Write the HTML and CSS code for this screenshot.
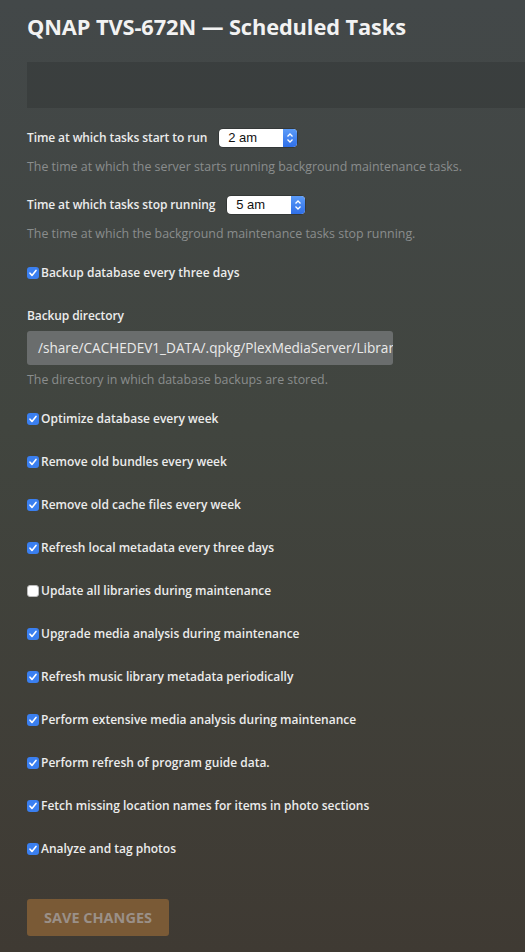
FILE: index.html
```
<!DOCTYPE html>
<html>
<head>
<meta charset="utf-8">
<link rel="stylesheet" href="styles.css">
</head>
<body>
<main class="page">
  <h1 class="title">QNAP TVS-672N — Scheduled Tasks</h1>
  <div class="panel"></div>

  <div class="select-row">
    <span class="label">Time at which tasks start to run</span>
    <div class="select"><span class="select-value">2 am</span><span class="stepper"><svg width="8" height="12" viewBox="0 0 8 12"><path d="M1.5 4.5 L4 2 L6.5 4.5 M1.5 7.5 L4 10 L6.5 7.5" fill="none" stroke="#fff" stroke-width="1.3"/></svg></span></div>
  </div>
  <p class="help help-a">The time at which the server starts running background maintenance tasks.</p>

  <div class="select-row">
    <span class="label">Time at which tasks stop running</span>
    <div class="select"><span class="select-value">5 am</span><span class="stepper"><svg width="8" height="12" viewBox="0 0 8 12"><path d="M1.5 4.5 L4 2 L6.5 4.5 M1.5 7.5 L4 10 L6.5 7.5" fill="none" stroke="#fff" stroke-width="1.3"/></svg></span></div>
  </div>
  <p class="help help-b">The time at which the background maintenance tasks stop running.</p>

  <label class="check first"><span class="box on"><svg width="12" height="12" viewBox="0 0 12 12"><path d="M3 6.2 L5 8.4 L9 3.4" fill="none" stroke="#fff" stroke-width="1.6" stroke-linecap="round" stroke-linejoin="round"/></svg></span>Backup database every three days</label>

  <div class="label field-label">Backup directory</div>
  <div class="text-input">/share/CACHEDEV1_DATA/.qpkg/PlexMediaServer/Library</div>
  <p class="help help-c">The directory in which database backups are stored.</p>

  <div class="checks">
    <label class="check"><span class="box on"><svg width="12" height="12" viewBox="0 0 12 12"><path d="M3 6.2 L5 8.4 L9 3.4" fill="none" stroke="#fff" stroke-width="1.6" stroke-linecap="round" stroke-linejoin="round"/></svg></span>Optimize database every week</label>
    <label class="check"><span class="box on"><svg width="12" height="12" viewBox="0 0 12 12"><path d="M3 6.2 L5 8.4 L9 3.4" fill="none" stroke="#fff" stroke-width="1.6" stroke-linecap="round" stroke-linejoin="round"/></svg></span>Remove old bundles every week</label>
    <label class="check"><span class="box on"><svg width="12" height="12" viewBox="0 0 12 12"><path d="M3 6.2 L5 8.4 L9 3.4" fill="none" stroke="#fff" stroke-width="1.6" stroke-linecap="round" stroke-linejoin="round"/></svg></span>Remove old cache files every week</label>
    <label class="check"><span class="box on"><svg width="12" height="12" viewBox="0 0 12 12"><path d="M3 6.2 L5 8.4 L9 3.4" fill="none" stroke="#fff" stroke-width="1.6" stroke-linecap="round" stroke-linejoin="round"/></svg></span>Refresh local metadata every three days</label>
    <label class="check"><span class="box off"></span>Update all libraries during maintenance</label>
    <label class="check"><span class="box on"><svg width="12" height="12" viewBox="0 0 12 12"><path d="M3 6.2 L5 8.4 L9 3.4" fill="none" stroke="#fff" stroke-width="1.6" stroke-linecap="round" stroke-linejoin="round"/></svg></span>Upgrade media analysis during maintenance</label>
    <label class="check"><span class="box on"><svg width="12" height="12" viewBox="0 0 12 12"><path d="M3 6.2 L5 8.4 L9 3.4" fill="none" stroke="#fff" stroke-width="1.6" stroke-linecap="round" stroke-linejoin="round"/></svg></span>Refresh music library metadata periodically</label>
    <label class="check"><span class="box on"><svg width="12" height="12" viewBox="0 0 12 12"><path d="M3 6.2 L5 8.4 L9 3.4" fill="none" stroke="#fff" stroke-width="1.6" stroke-linecap="round" stroke-linejoin="round"/></svg></span>Perform extensive media analysis during maintenance</label>
    <label class="check"><span class="box on"><svg width="12" height="12" viewBox="0 0 12 12"><path d="M3 6.2 L5 8.4 L9 3.4" fill="none" stroke="#fff" stroke-width="1.6" stroke-linecap="round" stroke-linejoin="round"/></svg></span>Perform refresh of program guide data.</label>
    <label class="check"><span class="box on"><svg width="12" height="12" viewBox="0 0 12 12"><path d="M3 6.2 L5 8.4 L9 3.4" fill="none" stroke="#fff" stroke-width="1.6" stroke-linecap="round" stroke-linejoin="round"/></svg></span>Fetch missing location names for items in photo sections</label>
    <label class="check"><span class="box on"><svg width="12" height="12" viewBox="0 0 12 12"><path d="M3 6.2 L5 8.4 L9 3.4" fill="none" stroke="#fff" stroke-width="1.6" stroke-linecap="round" stroke-linejoin="round"/></svg></span>Analyze and tag photos</label>
  </div>

  <button class="save">SAVE CHANGES</button>
</main>
</body>
</html>
```
FILE: styles.css
```
html, body {
  margin: 0;
  padding: 0;
}
body {
  width: 525px;
  height: 952px;
  overflow: hidden;
  background: linear-gradient(180deg, #434849 0%, #41453f 45%, #3f3a33 100%);
  font-family: "Open Sans", "Liberation Sans", sans-serif;
  color: #e8e8e8;
}
.page {
  display: flex;
  flex-direction: column;
  align-items: flex-start;
  padding-left: 27px;
}
.title {
  margin: 12px 0 20px;
  font-size: 21.8px;
  line-height: 30px;
  font-weight: 700;
  color: #f2f2f2;
  letter-spacing: -0.1px;
}
.panel {
  align-self: stretch;
  height: 46px;
  background: rgba(0, 0, 0, 0.12);
  margin-bottom: 21px;
}
.label {
  font-size: 12px;
  font-weight: 600;
  line-height: 18px;
  color: #ececec;
  letter-spacing: -0.1px;
}
.select-row {
  display: flex;
  align-items: center;
  gap: 12px;
  height: 18px;
}
.select {
  display: flex;
  width: 78px;
  height: 18px;
  background: #fff;
  border-radius: 4px;
  overflow: hidden;
  box-shadow: 0 0 0 0.5px rgba(0,0,0,0.4);
}
.select-value {
  flex: 1;
  font-family: "Liberation Sans", Arial, sans-serif;
  font-size: 13px;
  line-height: 18px;
  color: #111;
  padding-left: 9px;
}
.stepper {
  width: 14px;
  background: linear-gradient(180deg, #5b9bf8, #2f6fe8);
  display: flex;
  align-items: center;
  justify-content: center;
}
.help {
  margin: 0;
  font-size: 12.4px;
  line-height: 18px;
  color: #8a8d8d;
}
.help-a { margin: 11px 0 20px; }
.help-b { margin: 11px 0 21px; }
.help-c { margin: 6px 0 21px; }
.check {
  display: flex;
  align-items: center;
  gap: 2px;
  font-size: 12px;
  font-weight: 600;
  line-height: 18px;
  color: #ececec;
}
.box {
  width: 12px;
  height: 12px;
  border-radius: 3px;
  display: flex;
  align-items: center;
  justify-content: center;
  box-sizing: border-box;
}
.box.on {
  background: #3a7ff0;
}
.box.off {
  background: #fff;
  border: 1px solid #bbb;
}
.field-label {
  margin-top: 25px;
}
.text-input {
  margin-top: 6px;
  width: 366px;
  height: 34px;
  box-sizing: border-box;
  background: #6a6d6d;
  border-radius: 3px;
  padding: 0 10px 0 11px;
  font-size: 13.6px;
  line-height: 34px;
  color: #eaeaea;
  white-space: nowrap;
  overflow: hidden;
}
.checks {
  display: flex;
  flex-direction: column;
  gap: 25px;
}
.save {
  margin-top: 41px;
  width: 142px;
  height: 37px;
  border: none;
  border-radius: 3px;
  background: #7a5a36;
  color: #9a9088;
  font-family: "Open Sans", "Liberation Sans", sans-serif;
  font-weight: 700;
  font-size: 14.5px;
  padding: 0;
}
```
